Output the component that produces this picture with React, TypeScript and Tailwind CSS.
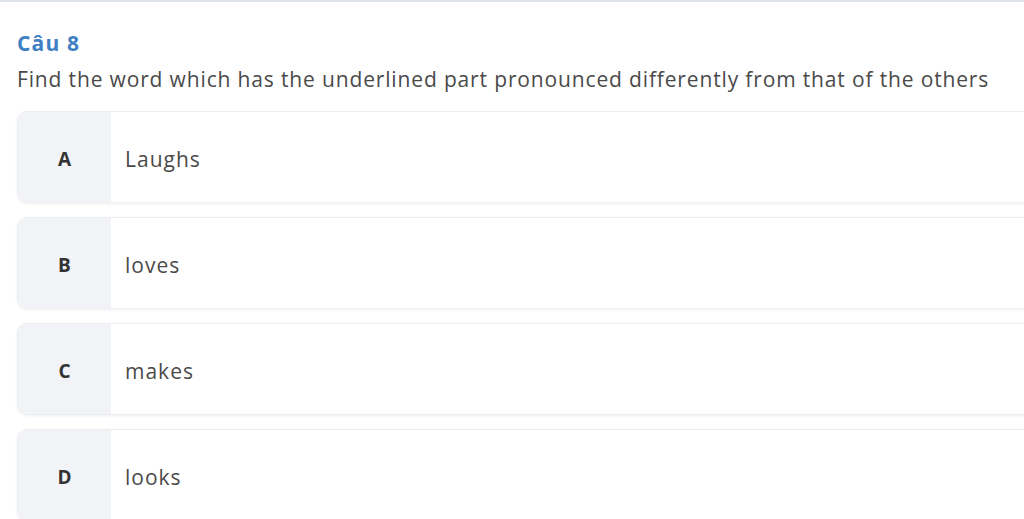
import React from "react"

const options = [
  { key: "A", text: "Laughs" },
  { key: "B", text: "loves" },
  { key: "C", text: "makes" },
  { key: "D", text: "looks" },
]

export default function App() {
  return (
    <div
      className="h-[519px] w-[1024px] overflow-hidden bg-white"
      style={{ fontFamily: '"Open Sans", "Noto Sans", sans-serif' }}
    >
      <div className="h-[2px] bg-[#dfe3ea]" />
      <div className="pl-[17px] pt-[27px]">
        <h3 className="text-[21px] font-bold leading-[28px] tracking-[1.2px] text-[#3f7fc4]">Câu 8</h3>
        <p className="mt-[8px] text-[21px] leading-[28px] tracking-[0.85px] text-[#4a4a4a]">
          Find the word which has the underlined part pronounced differently from that of the others
        </p>
        <div className="mt-[18px] mr-[-30px] flex flex-col gap-[14px]">
          {options.map((o) => (
            <div
              key={o.key}
              className="flex h-[92px] overflow-hidden rounded-[10px] border border-[#eceef1] bg-white shadow-[0_1px_3px_rgba(0,0,0,0.06)]"
            >
              <div className="flex w-[93px] shrink-0 items-center justify-center bg-[#f1f3f6] pt-[5px] text-[19px] font-bold text-[#333]">
                {o.key}
              </div>
              <div className="flex items-center pl-[14px] pt-[5px] text-[21px] tracking-[1px] text-[#4a4a4a]">{o.text}</div>
            </div>
          ))}
        </div>
      </div>
    </div>
  )
}
